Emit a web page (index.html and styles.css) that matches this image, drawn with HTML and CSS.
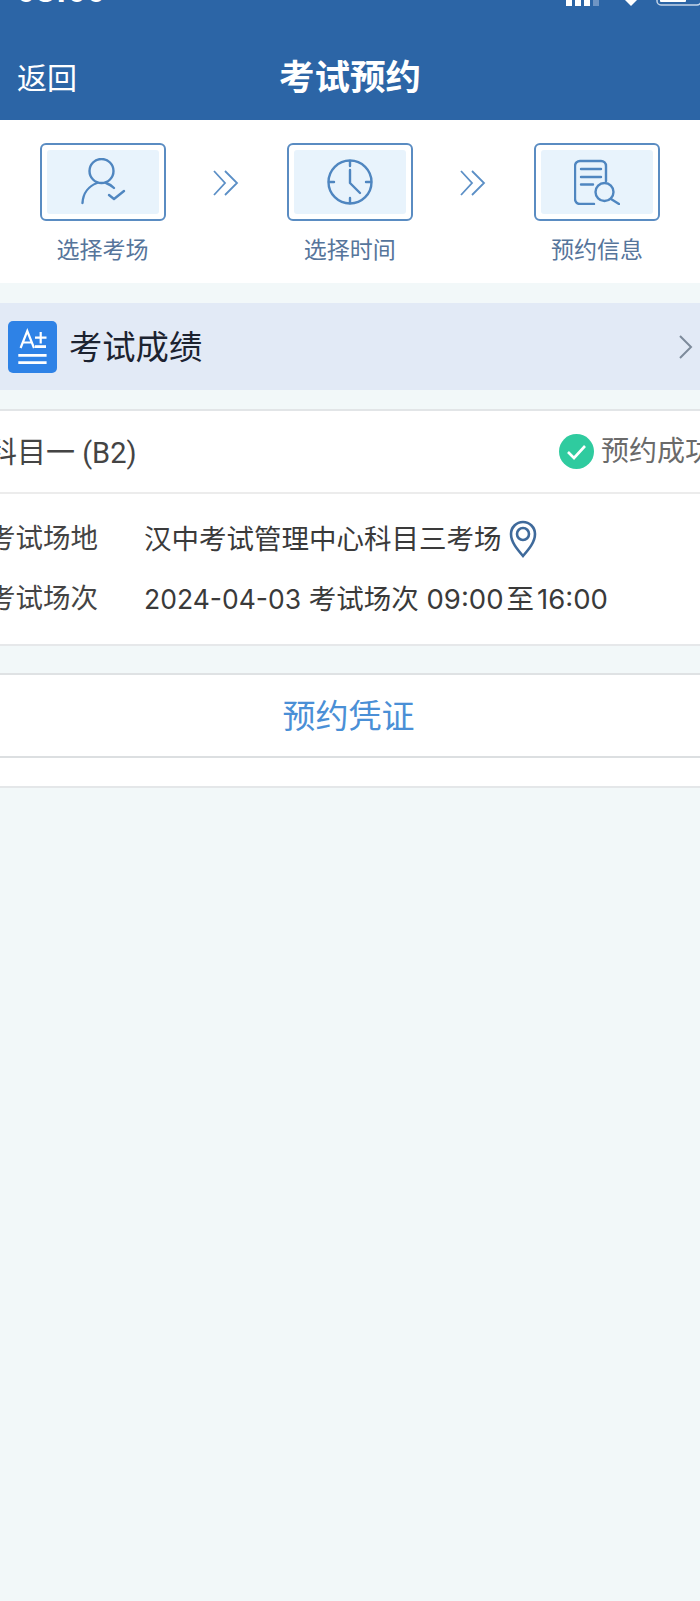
FILE: index.html
```html
<!DOCTYPE html>
<html lang="zh">
<head>
<meta charset="utf-8">
<title>考试预约</title>
<link rel="stylesheet" href="styles.css">
</head>
<body>
<div class="page">
  <header class="header">
    <div class="status">
      <span class="time">08:00</span>
      <div class="status-icons">
        <svg class="signal" width="36" height="6" viewBox="0 0 36 6"><path d="M1 0h6v6H1zM10 0h6v6h-6zM19 0h6v6h-6z" fill="#fff"/><path d="M28 0h6v6h-6z" fill="#6f95c4"/></svg>
        <svg class="wifi" width="18" height="6" viewBox="0 0 18 6"><path d="M3 0h12L9 6z" fill="#fff"/></svg>
        <svg class="battery" width="44" height="6" viewBox="0 0 44 6"><rect x="1" y="-10" width="44" height="15" rx="4" fill="none" stroke="#c3d4e8" stroke-width="1.500"/><rect x="4" y="-8" width="26" height="10" rx="1" fill="#fff"/></svg>
      </div>
    </div>
    <div class="nav">
      <span class="back">返回</span>
      <h1 class="title">考试预约</h1>
    </div>
  </header>

  <section class="steps">
    <div class="step">
      <div class="step-box">
        <svg width="48" height="48" viewBox="0 0 48 48" fill="none" stroke="#4f86c0" stroke-width="2.400" stroke-linecap="round" stroke-linejoin="round"><circle cx="22.500" cy="13" r="12"/><path d="M3.500 45C4 35 10 28 18 25M27 25c3 1 6 3 8 5"/><path d="M30 37l5 4 10-8"/></svg>
      </div>
      <span class="step-label">选择考场</span>
    </div>
    <svg class="arrows" width="26" height="26" viewBox="0 0 26 26" fill="none" stroke="#5b8fc6" stroke-width="1.800"><path d="M1 1l11 12L1 25M12 1l12 12-12 12"/></svg>
    <div class="step">
      <div class="step-box">
        <svg width="46" height="46" viewBox="0 0 46 46" fill="none" stroke="#4f86c0" stroke-width="2.400" stroke-linecap="round" stroke-linejoin="round"><circle cx="23" cy="23" r="21.500"/><path d="M23 2v5M2 23h5M39 23h5M23 39v5M23 11v13l10 10"/></svg>
      </div>
      <span class="step-label">选择时间</span>
    </div>
    <svg class="arrows" width="26" height="26" viewBox="0 0 26 26" fill="none" stroke="#5b8fc6" stroke-width="1.800"><path d="M1 1l11 12L1 25M12 1l12 12-12 12"/></svg>
    <div class="step">
      <div class="step-box">
        <svg width="46" height="46" viewBox="0 0 46 46" fill="none" stroke="#4f86c0" stroke-width="2.400" stroke-linecap="round" stroke-linejoin="round"><path d="M20 45H6a5 5 0 0 1-5-5V7a5 5 0 0 1 5-5h21a5 5 0 0 1 5 5v15"/><path d="M7 10h20M7 18h20M7 25.500h12"/><circle cx="30.500" cy="33" r="9"/><path d="M37 40l8 5"/></svg>
      </div>
      <span class="step-label">预约信息</span>
    </div>
  </section>

  <section class="score">
    <div class="score-left">
      <svg class="score-icon" width="49" height="52" viewBox="0 0 49 52"><rect width="49" height="52" rx="5" fill="#2e82e6"/><g stroke="#fff" fill="none" stroke-width="2.200"><path d="M12.600 27L19.300 10l6.700 17M14.800 21.500h9"/><path d="M27 16.700h11.500M32.700 11v11.500"/><path d="M27 25.600h11" stroke-width="2.800"/><path d="M10.300 34.300h28.300M10.300 41.600h28.300" stroke-width="2.800"/></g></svg>
      <span class="score-text">考试成绩</span>
    </div>
    <svg class="chevron" width="14" height="24" viewBox="0 0 14 24" fill="none" stroke="#7d8b9b" stroke-width="2"><path d="M1 1l11 11L1 23"/></svg>
  </section>

  <section class="card">
    <div class="card-head">
      <span class="subject">科目一 (B2)</span>
      <div class="result">
        <svg width="35" height="35" viewBox="0 0 35 35"><circle cx="17.500" cy="17.500" r="17.500" fill="#2fcb9f"/><path d="M9 18l6 6 11-12" fill="none" stroke="#fff" stroke-width="2.600"/></svg>
        <span class="result-text">预约成功</span>
      </div>
    </div>
    <div class="card-body">
      <div class="info-row">
        <span class="info-label">考试场地</span>
        <span class="info-value">汉中考试管理中心科目三考场</span>
        <svg class="pin" width="28" height="38" viewBox="0 0 28 38" fill="none" stroke="#3f6a9b" stroke-width="2.600"><path d="M14 36C8 29 2 22 2 14a12 12 0 0 1 24 0c0 8-6 15-12 22z"/><circle cx="14" cy="14" r="6"/></svg>
      </div>
      <div class="info-row">
        <span class="info-label">考试场次</span>
        <span class="info-value"><span class="date">2024-04-03</span> 考试场次 09:00<span class="to">至</span>16:00</span>
      </div>
    </div>
  </section>

  <section class="voucher">预约凭证</section>
  <div class="tail"></div>
</div>
</body>
</html>
```

FILE: styles.css
```css
* { box-sizing: border-box; }
html, body { margin: 0; padding: 0; }
body {
  width: 700px;
  height: 1601px;
  overflow: hidden;
  background: #f2f8f9;
  font-family: "Liberation Sans", "Noto Sans CJK SC", sans-serif;
  color: #333;
}
.page { display: flex; flex-direction: column; height: 1601px; overflow: hidden; }

.header { height: 120px; background: #2c65a6; color: #fff; flex: none; overflow: hidden; }
.status { height: 47px; padding: 0 0 0 17px; display: flex; justify-content: space-between; align-items: flex-start; }
.time { font-size: 33px; line-height: 30px; height: 30px; font-weight: 700; letter-spacing: 1px; margin-top: -24px; }
.status-icons { display: flex; align-items: flex-start; }
.wifi { margin-left: 21px; }
.battery { margin-left: 16px; }
.nav { position: relative; height: 73px; display: flex; align-items: center; justify-content: center; }
.back { position: absolute; left: 17px; top: 10px; font-size: 30px; line-height: 44px; }
.title { margin: -12px 0 0; font-size: 35.500px; font-weight: 700; line-height: 44px; }

.steps { flex: none; height: 163px; background: #fff; display: flex; justify-content: space-between; align-items: flex-start; padding: 23px 40px 0 39.500px; }
.step { width: 126px; display: flex; flex-direction: column; align-items: center; }
.step-box { width: 126px; height: 78px; border: 2.500px solid #5a8cc2; border-radius: 6px; background: #fff; display: flex; align-items: center; justify-content: center; position: relative; }
.step-box::before { content: ""; position: absolute; inset: 5px; background: #e8f3fc; border-radius: 3px; }
.step-box svg { position: relative; }
.step-label { margin-top: 14px; font-size: 23px; line-height: 30px; color: #56759b; }
.arrows { margin-top: 27px; flex: none; }

.score { flex: none; margin-top: 20px; height: 87px; background: #e2eaf6; display: flex; align-items: center; justify-content: space-between; padding: 0 7px 0 8px; }
.score-left { display: flex; align-items: center; }
.score-text { margin: 3px 0 0 12px; font-size: 33.300px; line-height: 44px; color: #1c2330; }

.card { flex: none; margin: 19px -13px 0 -12px; background: #fff; border-top: 2px solid #e2e5e7; border-bottom: 2px solid #e6e8ea; height: 237px; }
.card-head { height: 83px; border-bottom: 2px solid #ececec; display: flex; align-items: center; justify-content: space-between; }
.subject { margin-top: 3px; font-family: Roboto, "Noto Sans CJK SC", sans-serif; font-size: 29px; line-height: 40px; color: #444; }
.result { display: flex; align-items: center; gap: 7px; }
.result-text { font-size: 28px; line-height: 40px; color: #6a6a6a; }
.card-body { padding-top: 26px; }
.info-row { display: flex; align-items: center; height: 38px; margin-bottom: 22px; }
.info-label { width: 156px; font-size: 27.500px; line-height: 38px; color: #444; flex: none; }
.info-value { font-family: Inter, "Noto Sans CJK SC", sans-serif; font-size: 27.500px; line-height: 38px; color: #3a3a3a; white-space: nowrap; }
.date { font-size: 26.500px; }
.to { margin: 0 3px; }
.pin { margin-left: 7px; }

.voucher { flex: none; margin-top: 27px; height: 85px; background: #fff; border-top: 2px solid #dfe2e4; border-bottom: 2px solid #dcdfe1; padding: 0 3px 4px 0; display: flex; align-items: center; justify-content: center; font-size: 33px; color: #4a8fd6; }
.tail { flex: none; height: 30px; background: #fff; border-bottom: 2px solid #e4e7e9; }
```
